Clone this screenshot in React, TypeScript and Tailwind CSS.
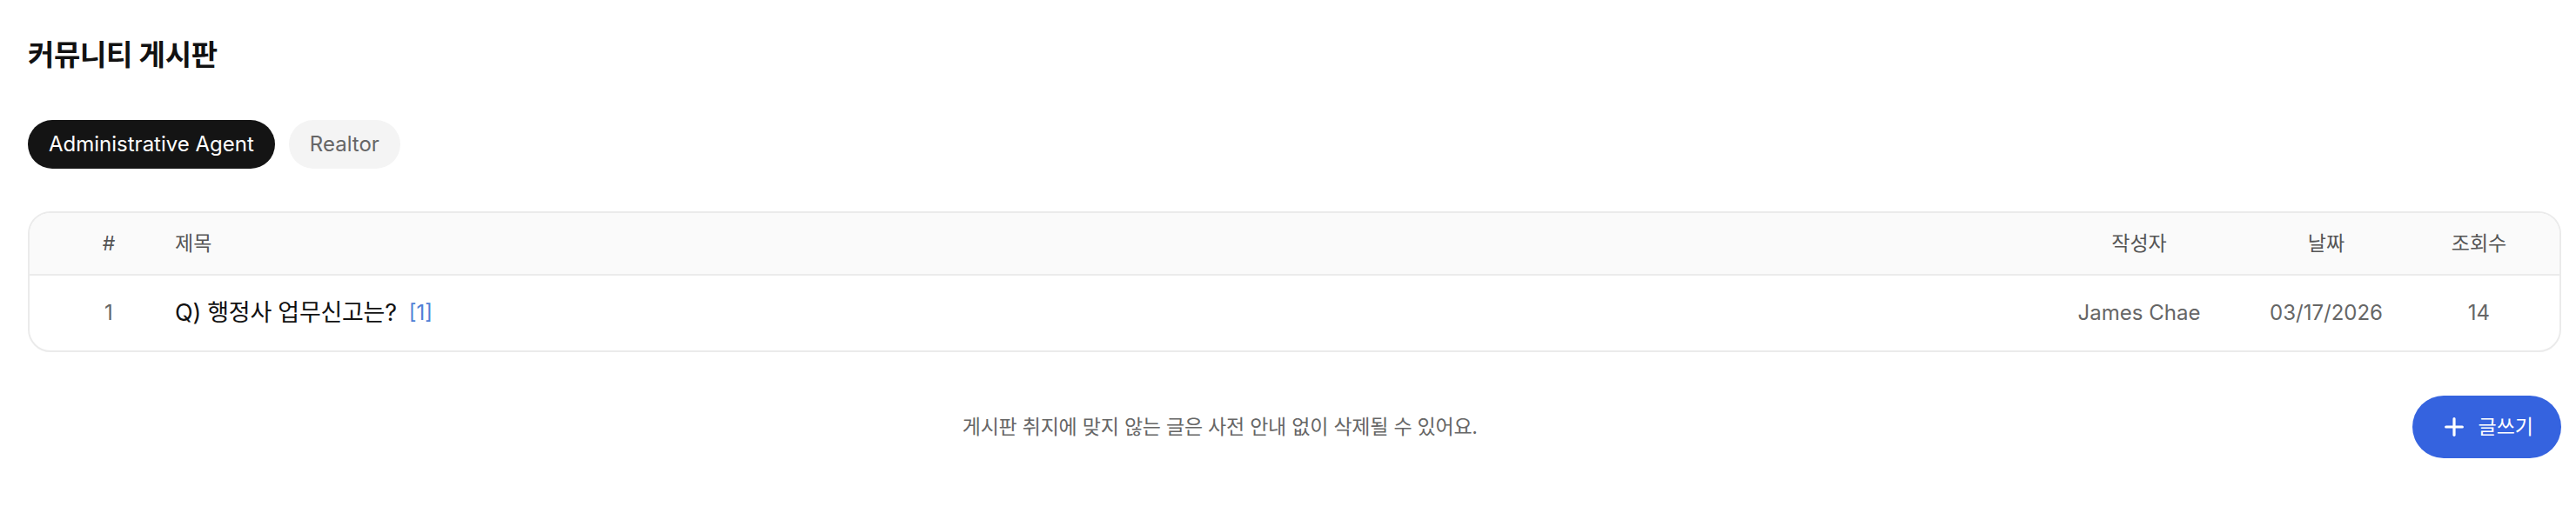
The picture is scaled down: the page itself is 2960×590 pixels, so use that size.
import { Plus } from "lucide-react";

const categories = [
  { label: "Administrative Agent", active: true },
  { label: "Realtor", active: false },
];

const posts = [
  {
    id: 1,
    title: "Q) 행정사 업무신고는?",
    comments: 1,
    author: "James Chae",
    date: "03/17/2026",
    views: 14,
  },
];

export default function App() {
  return (
    <div className="min-h-screen bg-white pl-8 pr-[17px] pt-[43px] font-['Inter','Noto_Sans_CJK_KR',sans-serif] text-[#111]">
      {/* Title */}
      <h1 className="h-10 text-[33px] font-bold leading-10 tracking-[-0.01em]">
        커뮤니티 게시판
      </h1>

      {/* Category pills */}
      <div className="mt-[55px] flex items-center gap-4">
        {categories.map((c) => (
          <button
            key={c.label}
            type="button"
            className={
              c.active
                ? "h-14 rounded-full bg-[#141414] px-6 text-[24px] leading-8 text-white"
                : "h-14 rounded-full bg-[#f4f4f4] px-6 text-[24px] leading-8 text-[#666]"
            }
          >
            {c.label}
          </button>
        ))}
      </div>

      {/* Board table */}
      <div className="mt-[49px] overflow-hidden rounded-[26px] border-2 border-[#ebebeb]">
        <div className="flex h-[72px] items-center border-b-2 border-[#ebebeb] bg-[#fafafa] text-[23px] text-[#555]">
          <div className="w-[167px] pl-[15px] text-center">#</div>
          <div className="flex-1">제목</div>
          <div className="w-[264px] text-center">작성자</div>
          <div className="w-[166px] text-center">날짜</div>
          <div className="w-[185px] text-center">조회수</div>
        </div>
        {posts.map((p) => (
          <div key={p.id} className="flex h-[86px] items-center text-[24px] text-[#666]">
            <div className="w-[167px] pl-[15px] text-center">{p.id}</div>
            <div className="flex flex-1 items-center gap-[14px]">
              <span className="text-[27px] tracking-[-0.01em] text-[#111]">{p.title}</span>
              <span className="text-[24px] text-[#4f7fd6]">[{p.comments}]</span>
            </div>
            <div className="w-[264px] text-center">{p.author}</div>
            <div className="w-[166px] text-center">{p.date}</div>
            <div className="w-[185px] text-center">{p.views}</div>
          </div>
        ))}
      </div>

      {/* Footer */}
      <div className="mt-[50px] flex items-center">
        <p className="flex-1 text-center text-[23px] tracking-[-0.01em] text-[#666]">
          게시판 취지에 맞지 않는 글은 사전 안내 없이 삭제될 수 있어요.
        </p>
        <button
          type="button"
          className="flex h-[72px] items-center gap-3 rounded-full bg-[#3563df] px-8 text-[23px] text-white"
        >
          <Plus size={32} strokeWidth={2.4} />
          글쓰기
        </button>
      </div>
    </div>
  );
}
